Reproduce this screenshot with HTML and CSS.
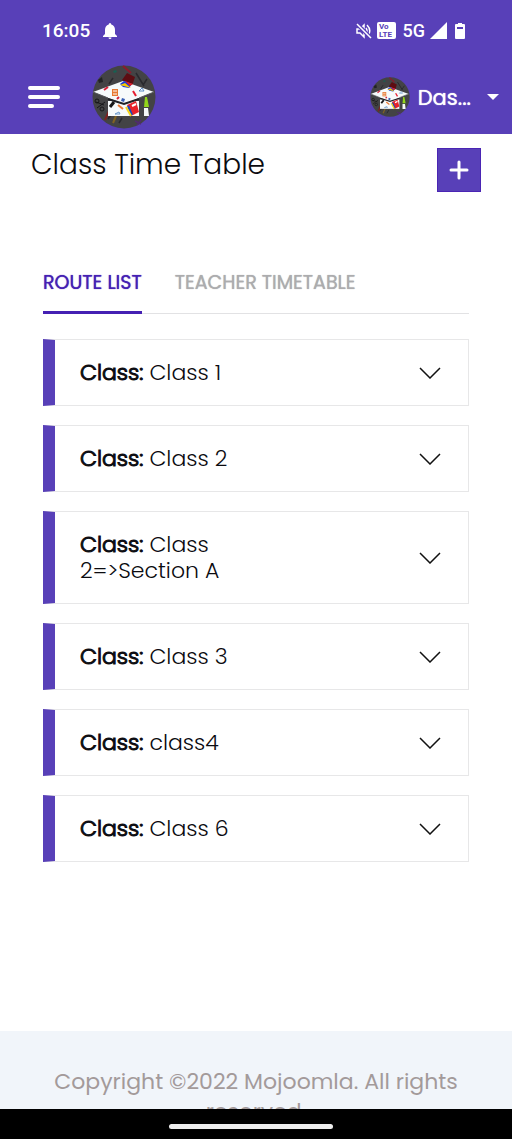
FILE: index.html
```html
<!DOCTYPE html>
<html lang="en">
<head>
<meta charset="utf-8">
<meta name="viewport" content="width=device-width, initial-scale=1">
<title>Class Time Table</title>
<link rel="stylesheet" href="styles.css">
</head>
<body>
<svg class="defs" aria-hidden="true">
  <symbol id="cap" viewBox="0 0 64 64">
    <circle cx="32" cy="32" r="31.5" fill="#434345"/>
    <path d="M30 15l5-7 8 4-3 9z" fill="#5d0d12"/>
    <path d="M31 1l8 7" stroke="#8c1a2c" stroke-width="2"/>
    <path d="M44 8l8 13M55 14l-4 6M21 13l-4 6M16 54l5-7M27 58l3-5" stroke="#29292d" stroke-width="1.5"/>
    <path d="M21 6l3-1 1 2-3 1z" fill="#186052"/>
    <path d="M6 15l4-3 1 5-4 1z" fill="#222225"/>
    <path d="M4 37l8 3M5 43l8-6" stroke="#161618" stroke-width="1"/>
    <circle cx="5" cy="36" r="2" fill="none" stroke="#161618"/>
    <circle cx="10" cy="44" r="2" fill="none" stroke="#161618"/>
    <path d="M17 46l-4 9" stroke="#7d2321" stroke-width="2"/>
    <path d="M24 51l-3 7" stroke="#806323" stroke-width="2"/>
    <path d="M43 56l6 3M45 60l4-5" stroke="#512a70" stroke-width="1.5"/>
    <path d="M16 36h31v15H16z" fill="#f6fafb"/>
    <path d="M1 27l30-11 31 11-30 12z" fill="#f6fafb"/>
    <path d="M16 34l16 5 15-5" fill="none" stroke="#202126" stroke-width="2"/>
    <path d="M1 27l15 6M47 33l15-6" stroke="#55565a" stroke-width="1"/>
    <path d="M28 19l4-3 8 3-3 4-6-1z" fill="#163bdf"/>
    <path d="M33 16l5 5 3-2z" fill="#e11c20"/>
    <path d="M28 20l5-2 6 5z" fill="#f6c900"/>
    <path d="M20 24h6v7h-6z" fill="#e77932"/>
    <path d="M21 26h4M21 29h4" stroke="#fff"/>
    <path d="M12 25l4-3M25 34l2-2" stroke="#d6223a" stroke-width="2"/>
    <path d="M41 26l3 5" stroke="#e51e31" stroke-width="2"/>
    <path d="M47 26l3-3 2 3z" fill="#fff" stroke="#5789c5"/>
    <path d="M30 33l3 1-1 3-3-1z" fill="#3960b5"/>
    <path d="M22 37l-4 5" stroke="#171718" stroke-width="3"/>
    <path d="M26 40l5 4" stroke="#ed7a32" stroke-width="2"/>
    <path d="M23 49l4-2 1 2z" fill="#fff" stroke="#6998cb"/>
    <path d="M35 40l9-4 3 11-8 4z" fill="#e7222a"/>
    <path d="M36 41l4 9" stroke="#174cbf" stroke-width="2"/>
    <path d="M34 42l5 9" stroke="#f4d51c" stroke-width="2"/>
    <path d="M40 41l4-2" stroke="#fff" stroke-width="2"/>
    <path d="M53 32h2l2 10h-5z" fill="#91d51a"/>
    <path d="M52 43h4l1 8h-5z" fill="#f5f8f8"/>
  </symbol>
  <symbol id="chevron" viewBox="0 0 22 12">
    <path d="M1 1l10 10L21 1" fill="none" stroke="#111" stroke-width="1.5"/>
  </symbol>
</svg>

<div class="status">
  <div class="status-group">
    <span>16:05</span>
    <svg class="bell" viewBox="0 0 14 16"><path d="M7 0q1.300 0 1.300 1.500Q12 2.500 12 7v4l2 2v1H0v-1l2-2V7q0-4.500 3.700-5.500Q5.700 0 7 0zM5.500 14.500h3q0 1.500-1.500 1.500t-1.500-1.500z" fill="#fff"/></svg>
  </div>
  <div class="status-icons">
    <svg width="16" height="16" viewBox="0 0 16 16" fill="none" stroke="#fff" stroke-width="1.500"><path d="M1 6h3l4-4v12L4 10H1zM10 5q2 3 0 6M11 2q5 5 1 11"/><path d="M1 1l14 14" stroke="#5840b8" stroke-width="4"/><path d="M1 1l14 14"/></svg>
    <svg width="19" height="17" viewBox="0 0 19 17"><rect width="19" height="17" rx="2" fill="#fff"/><text class="volte" x="2" y="7">Vo</text><text class="volte" x="2" y="15">LTE</text></svg>
    <span class="network">5G</span>
    <svg width="17" height="17" viewBox="0 0 17 17"><path d="M17 0v17H0z" fill="#fff"/></svg>
    <svg class="battery" width="10" height="16" viewBox="0 0 10 16"><path d="M3 0h4v1h2q1 0 1 1v13q0 1-1 1H1q-1 0-1-1V2q0-1 1-1h2z" fill="#fff"/><path d="M2 4h6v2H2z" fill="#5840b8"/></svg>
  </div>
</div>

<header class="header">
  <button class="menu" aria-label="Menu"><svg width="32" height="24" viewBox="0 0 32 24" stroke="#fff" stroke-width="4" stroke-linecap="round"><path d="M2 3h28M2 12h28M2 21h22"/></svg></button>
  <a href="#" class="brand" aria-label="Home"><svg class="logo"><use href="#cap"/></svg></a>
  <button class="account">
    <svg class="avatar" aria-hidden="true"><use href="#cap"/></svg>
    <span class="account-name">Das...</span>
    <svg width="12" height="6" viewBox="0 0 12 6"><path d="M0 0h12L6 6z" fill="#fff"/></svg>
  </button>
</header>

<main class="main">
  <div class="title-row">
    <h1 class="title">Class Time Table</h1>
    <button class="add" aria-label="Add"><svg width="20" height="20" viewBox="0 0 20 20" stroke="#fff" stroke-width="3" stroke-linecap="round"><path d="M10 2v16M2 10h16"/></svg></button>
  </div>
  <nav class="tabs">
    <a href="#" class="tab active" aria-current="page">ROUTE LIST</a>
    <a href="#" class="tab">TEACHER TIMETABLE</a>
  </nav>
  <div class="list">
    <button class="item"><span class="label"><b>Class:</b> Class 1</span><svg class="chevron"><use href="#chevron"/></svg></button>
    <button class="item"><span class="label"><b>Class:</b> Class 2</span><svg class="chevron"><use href="#chevron"/></svg></button>
    <button class="item"><span class="label"><b>Class:</b> Class 2=&gt;Section A</span><svg class="chevron"><use href="#chevron"/></svg></button>
    <button class="item"><span class="label"><b>Class:</b> Class 3</span><svg class="chevron"><use href="#chevron"/></svg></button>
    <button class="item"><span class="label"><b>Class:</b> class4</span><svg class="chevron"><use href="#chevron"/></svg></button>
    <button class="item"><span class="label"><b>Class:</b> Class 6</span><svg class="chevron"><use href="#chevron"/></svg></button>
  </div>
</main>

<footer class="footer"><p class="copyright">Copyright ©2022 Mojoomla. All rights reserved.</p></footer>
<div class="system-nav"><span class="handle"></span></div>
</body>
</html>
```
FILE: styles.css
```css
* { box-sizing: border-box; }
body {
  margin: 0;
  min-height: 100vh;
  display: flex;
  flex-direction: column;
  background: #fff;
  color: #0b0b10;
  font-family: Poppins, Inter, "Open Sans", sans-serif;
}
button { border: 0; padding: 0; background: none; color: inherit; font: inherit; cursor: pointer; }
a { color: inherit; text-decoration: none; }
svg { display: block; flex: none; }
.defs { position: absolute; width: 0; height: 0; }

.status {
  display: flex;
  justify-content: space-between;
  align-items: center;
  height: 60px;
  padding: 1px 47px 0 42px;
  background: #5840b8;
  color: #fff;
  font: 500 19px/24px Roboto, sans-serif;
}
.status-group { display: flex; align-items: center; gap: 13px; }
.status-icons { display: flex; align-items: center; gap: 5px; }
.bell { width: 14px; height: 16px; }
.network { margin-left: 2px; font-size: 18px; }
.battery { margin-left: 3px; }
.volte { font: 700 8px Roboto, sans-serif; fill: #5840b8; }

.header {
  display: flex;
  align-items: center;
  height: 74px;
  padding: 0 13px 0 28px;
  background: #5840b8;
  color: #fff;
}
.brand { margin-left: 32px; }
.logo { width: 64px; height: 64px; }
.account { display: flex; align-items: center; margin-left: auto; }
.avatar { width: 40px; height: 40px; margin-right: 8px; }
.account-name { margin-right: 16px; padding-top: 2px; font-size: 21px; line-height: 32px; font-weight: 400; text-shadow: 0 0 1px currentColor; }

.main { flex: 1; padding: 14px 31px 32px; }
.title-row { display: flex; justify-content: space-between; align-items: flex-start; }
.title { margin: 0; font-size: 28px; line-height: 34px; font-weight: 300; }
.add { display: grid; place-items: center; width: 44px; height: 44px; background: #5840b8; border: 1px solid #4a25b4; }

.tabs {
  display: flex;
  gap: 33px;
  margin: 71px 12px 25px;
  border-bottom: 1px solid #e2e2e4;
}
.tab {
  margin-bottom: -1px;
  padding: 8px 0 16px;
  border-bottom: 3px solid transparent;
  color: #acacae;
  font-size: 19px;
  line-height: 24px;
  font-weight: 400;
  text-shadow: 0 0 1px currentColor;
}
.tab.active { color: #4520b3; border-bottom-color: #4520b3; }

.list { display: flex; flex-direction: column; gap: 19px; margin: 0 12px; }
.item {
  display: flex;
  justify-content: space-between;
  align-items: center;
  padding: 20px 27px 19px 25px;
  border: 1px solid #e7e7e8;
  border-left: 12px solid #5840b8;
  text-align: left;
  font-size: 22px;
  line-height: 26px;
  font-weight: 300;
}
.label { max-width: 180px; }
.label b { font-weight: 300; -webkit-text-stroke: 1px currentColor; }
.chevron { width: 22px; height: 12px; }

.footer { height: 78px; padding: 36px 48px 0; overflow: hidden; background: #f1f5fa; }
.copyright { margin: 0; color: #a39a9a; text-align: center; font-size: 22px; line-height: 30px; font-weight: 400; }
.system-nav { display: grid; place-items: center; height: 30px; padding: 5px 10px 0 0; background: #000; }
.handle { width: 164px; height: 5px; border-radius: 3px; background: #eee; }
```
